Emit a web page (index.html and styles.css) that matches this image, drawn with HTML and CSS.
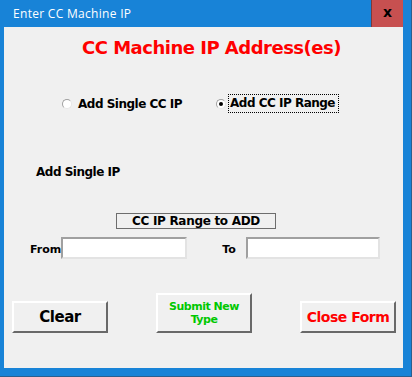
FILE: index.html
```html
<!DOCTYPE html>
<html lang="en">

<head>
    <meta charset="UTF-8">
    <title>Enter CC Machine IP</title>
    <link rel="stylesheet" href="styles.css">
</head>

<body>
    <div class="window">
        <div class="titlebar">
            <span class="title">Enter CC Machine IP</span>
            <span class="close">x</span>
        </div>
        <div class="content">
            <h1 class="heading">CC Machine IP Address(es)</h1>

            <div class="radio-row">
                <label class="radio-opt">
                    <input type="radio" name="mode" value="single">
                    <span>Add Single CC IP</span>
                </label>
                <label class="radio-opt radio-opt-2">
                    <input type="radio" name="mode" value="range" checked>
                    <span class="focused">Add CC IP Range</span>
                </label>
            </div>

            <div class="single-label">Add Single IP</div>

            <div class="range-box">CC IP Range to ADD</div>

            <div class="range-row">
                <label for="fromIp" class="from-label">From</label>
                <input type="text" id="fromIp" class="ip-input">
                <label for="toIp" class="to-label">To</label>
                <input type="text" id="toIp" class="ip-input ip-input-2">
            </div>

            <div class="button-row">
                <button type="button" class="btn btn-clear">Clear</button>
                <button type="button" class="btn btn-submit">Submit New<br>Type</button>
                <button type="button" class="btn btn-close">Close Form</button>
            </div>
        </div>
    </div>
</body>

</html>
```

FILE: styles.css
```css
html,
body {
    margin: 0;
    padding: 0;
}

body {
    font-family: "DejaVu Sans", Verdana, sans-serif;
    background-color: #1883d7;
}

.window {
    width: 412px;
    height: 377px;
    box-sizing: border-box;
    padding: 0 8px 8px 4px;
    background-color: #1883d7;
    border-right: 1px solid #2a5f8f;
    border-bottom: 1px solid #2a5f8f;
}

.titlebar {
    height: 27px;
    display: flex;
    justify-content: space-between;
}

.title {
    font-family: "Open Sans", "Noto Sans", sans-serif;
    font-size: 12px;
    letter-spacing: 0.3px;
    color: #ffffff;
    line-height: 27px;
    padding-left: 9px;
}

.close {
    width: 31px;
    height: 27px;
    background-color: #c75050;
    border-left: 1px solid #7d3a3a;
    text-align: center;
    font-weight: bold;
    font-size: 14px;
    line-height: 25px;
    color: #000000;
}

.content {
    height: 341px;
    background-color: #f0f0f0;
    overflow: hidden;
}

.heading {
    margin: 9px 0 0 78px;
    font-size: 18px;
    letter-spacing: -0.5px;
    line-height: 24px;
    color: #ff0000;
    white-space: nowrap;
}

/* option buttons */
.radio-row {
    display: flex;
    margin: 34px 0 0 58px;
    height: 19px;
    align-items: center;
}

.radio-opt {
    display: flex;
    align-items: center;
    font-size: 12px;
    letter-spacing: -0.5px;
    font-weight: bold;
}

.radio-opt-2 {
    margin-left: 34px;
}

.radio-opt input {
    appearance: none;
    -webkit-appearance: none;
    width: 10px;
    height: 10px;
    margin: 0 6px 0 0;
    border-radius: 50%;
    border: 1px solid #a0a0a0;
    border-right-color: #e6e6e6;
    border-bottom-color: #e6e6e6;
    background-color: #ffffff;
    position: relative;
}

.radio-opt-2 input {
    margin-right: 2px;
}

.radio-opt input:checked::after {
    content: "";
    position: absolute;
    left: 2px;
    top: 2px;
    width: 4px;
    height: 4px;
    border-radius: 50%;
    background-color: #000000;
}

.focused {
    border: 1px dotted #000000;
    padding: 0 3px 0 1px;
    line-height: 17px;
}

.single-label {
    margin: 52px 0 0 32px;
    font-size: 12px;
    letter-spacing: -0.5px;
    font-weight: bold;
}

.range-box {
    width: 158px;
    height: 14px;
    margin: 34px 0 0 112px;
    border: 1px solid #6d6d6d;
    font-size: 12px;
    letter-spacing: -0.3px;
    font-weight: bold;
    line-height: 14px;
    text-align: center;
}

.range-row {
    display: flex;
    align-items: flex-end;
    margin: 8px 0 0 26px;
}

.from-label,
.to-label {
    font-size: 11px;
    font-weight: bold;
    line-height: 13px;
    margin-bottom: 3px;
}

.ip-input {
    width: 122px;
    height: 18px;
    margin: 0;
    padding: 0;
    border: 2px solid #a0a0a0;
    border-right-color: #e3e3e3;
    border-bottom-color: #e3e3e3;
    background-color: #ffffff;
}

.to-label {
    margin-left: 35px;
}

.ip-input-2 {
    width: 130px;
    margin-left: 10px;
}

/* command buttons */
.button-row {
    display: flex;
    align-items: flex-end;
    margin: 34px 0 0 8px;
}

.btn {
    width: 96px;
    height: 32px;
    padding: 0;
    background-color: #f0f0f0;
    border: 2px solid #ffffff;
    border-right-color: #696969;
    border-bottom-color: #696969;
    font-family: "DejaVu Sans", Verdana, sans-serif;
    font-weight: bold;
    white-space: nowrap;
}

.btn-clear {
    font-size: 15px;
    letter-spacing: -0.5px;
    color: #000000;
}

.btn-submit {
    height: 40px;
    margin-left: 48px;
    font-size: 11px;
    letter-spacing: -0.5px;
    line-height: 13px;
    color: #00c800;
}

.btn-close {
    margin-left: 48px;
    font-size: 14px;
    letter-spacing: -0.5px;
    color: #ff0000;
}
```
